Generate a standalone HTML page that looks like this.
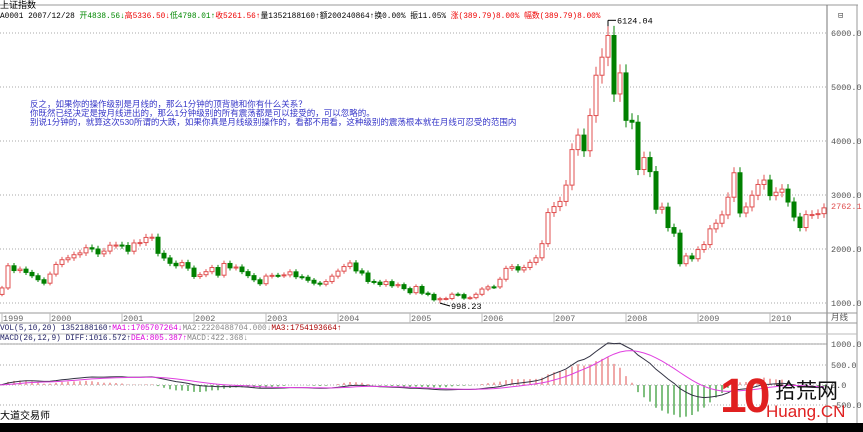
<!DOCTYPE html>
<html><head><meta charset="utf-8"><style>
body{margin:0;width:863px;height:432px;overflow:hidden;background:#fff;font-family:"Liberation Sans","Noto Sans CJK SC",sans-serif;font-size:9px;position:relative}
.t{position:absolute;white-space:nowrap;line-height:10px}
.m{font-family:'Liberation Mono','Noto Sans CJK SC',monospace;font-size:7.8px}
</style></head><body>
<svg id="s" width="863" height="432" style="position:absolute;left:0;top:0" font-family="Liberation Mono, Noto Sans CJK SC, monospace" font-size="8.5"></svg>
<div class="t" style="left:0;top:0">上证指数</div>
<div class="t m" style="left:0;top:12px">A0001 2007/12/28 <span style="color:#080">开4838.56↓</span><span style="color:#e00">高5336.50↓</span><span style="color:#080">低4798.01↑</span><span style="color:#e00">收5261.56↑</span>量1352188160↑额200240864↑换0.00% 振11.05% <span style="color:#e00">涨(389.79)8.00% 幅数(389.79)8.00%</span></div>
<div class="t" style="left:30px;top:100px;color:#3535c8;font-size:8.5px;line-height:9px">反之，如果你的操作级别是月线的，那么1分钟的顶背驰和你有什么关系？<br>你既然已经决定是按月线进出的，那么1分钟级别的所有震荡都是可以接受的，可以忽略的。<br>别说1分钟的，就算这次530所谓的大跌，如果你真是月线级别操作的，看都不用看，这种级别的震荡根本就在月线可忍受的范围内</div>
<div class="t m" style="left:0;top:324px;color:#226">VOL(5,10,20) 1352188160↑<span style="color:#d0d">MA1:1705707264↓</span><span style="color:#888">MA2:2220488704.000↓</span><span style="color:#a00">MA3:1754193664↑</span></div>
<div class="t m" style="left:0;top:334px;color:#226">MACD(26,12,9) DIFF:1016.572↑<span style="color:#d0d">DEA:805.387↑</span><span style="color:#888">MACD:422.368↓</span></div>
<div class="t" style="left:0;top:412px;font-size:10px">大道交易师</div>
<div style="position:absolute;left:0;top:423px;width:863px;height:9px;background:#000"></div>
<div class="t" style="left:720px;top:372px;color:#e02020;font-size:48px;line-height:50px;font-weight:bold;letter-spacing:-3px">10</div>
<div class="t" style="left:775px;top:380px;color:#111;font-size:21px;line-height:24px">拾荒网</div>
<div class="t" style="left:766px;top:403px;color:#e02020;font-size:17px;line-height:18px">Huang.CN</div>
<script>
var c=[1159,1279,1689,1601,1627,1566,1505,1431,1367,
1535,1714,1801,1836,1894,1928,2023,2000,1910,1961,2070,2073,
2065,1959,2112,2119,2214,2218,1920,1834,1735,1690,1748,1646,
1491,1524,1580,1657,1515,1732,1651,1666,1581,1507,1430,1357,
1499,1512,1511,1521,1577,1487,1477,1421,1367,1348,1397,1497,
1590,1675,1741,1595,1555,1399,1386,1342,1396,1320,1340,1266,
1191,1306,1181,1159,1060,1080,1083,1162,1155,1092,1099,1161,
1258,1299,1298,1440,1641,1672,1612,1658,1752,1837,2099,2675,
2786,2881,3183,3841,4109,3820,4471,5218,5552,5954,4871,5261,
4383,4348,3472,3693,3433,2736,2775,2397,2293,1728,1871,1820,
1990,2082,2373,2477,2632,2959,3412,2667,2779,2995,3195,3277,
2989,3051,3109,2870,2592,2398,2637,2638,2655,2762];
var o='';function L(x1,y1,x2,y2,s,d){o+='<line x1="'+x1+'" y1="'+y1+'" x2="'+x2+'" y2="'+y2+'" stroke="'+s+'"'+(d?' stroke-dasharray="1,2"':'')+'/>';}
function T(x,y,t,col){o+='<text x="'+x+'" y="'+y+'" fill="'+(col||'#555')+'">'+t+'</text>';}
function Y(p){return 357-0.054*p;}
L(0,5,858,5,'#999');L(827,5,827,423,'#777');L(857,5,857,423,'#999');
L(0,313,857,313,'#999');L(0,323,857,323,'#999');L(0,334,857,334,'#bbb');L(0,344,827,344,'#999');
for(var p=1000;p<=6000;p+=1000){L(0,Y(p),827,Y(p),'#aaa',1);T(831,Y(p)+3,p+'.0');}
[344,365,385,405].forEach(function(y,i){L(0,y,827,y,'#aaa',1);T(831,y+3,['1000.0',' 500.0','   0.0','-500.0'][i]);});
T(831,320,'月线');T(838,18,'⊟');
var yrs=[1999,2000,2001,2002,2003,2004,2005,2006,2007,2008,2009,2010];
yrs.forEach(function(y,i){var x=i==0?2:50+(i-1)*72;L(x,313,x,323,'#bbb');T(x+1,321,y,'#666');});
var x0=-4;
for(var i=0;i<c.length;i++){var x=x0+i*6,op=i?c[i-1]:1120,cl=c[i],hi=Math.max(op,cl)*1.03,lo=Math.min(op,cl)*0.97;
if(i==102)hi=6124;if(i==74)lo=998;
var up=cl>=op,col=up?'#e05050':'#008000';
L(x,Y(hi),x,Y(lo),col);
var y1=Y(Math.max(op,cl)),h=Math.max(1,Y(Math.min(op,cl))-y1);
o+='<rect x="'+(x-2)+'" y="'+y1+'" width="4" height="'+h+'" fill="'+(up?'#fff':'#008000')+'" stroke="'+col+'"/>';}
var px=x0+102*6;
L(px,Y(6124),px,Y(6124)-6,'#000');L(px,Y(6124)-6,px+8,Y(6124)-6,'#000');T(px+9,Y(6124)-3,'6124.04','#000');
var lx=x0+74*6;L(lx,Y(998),lx+10,306,'#000');T(lx+11,309,'998.23','#000');
T(831,209,'2762.1','#e05050');
var e12=c[0],e26=c[0],dea=0,pd='',pe='';
for(var i=0;i<c.length;i++){e12=e12*11/13+c[i]*2/13;e26=e26*25/27+c[i]*2/27;var d=e12-e26;dea=dea*0.8+d*0.2;var x=x0+i*6;
pd+=(i?'L':'M')+x+','+(385-d*0.041).toFixed(1);pe+=(i?'L':'M')+x+','+(385-dea*0.041).toFixed(1);
var m=2*(d-dea);L(x,385,x,385-m*0.041,m>=0?'#e05050':'#008000');}
o+='<path d="'+pd+'" fill="none" stroke="#334" stroke-width="1"/><path d="'+pe+'" fill="none" stroke="#e040e0" stroke-width="1"/>';
document.getElementById('s').innerHTML=o;
</script>
</body></html>
